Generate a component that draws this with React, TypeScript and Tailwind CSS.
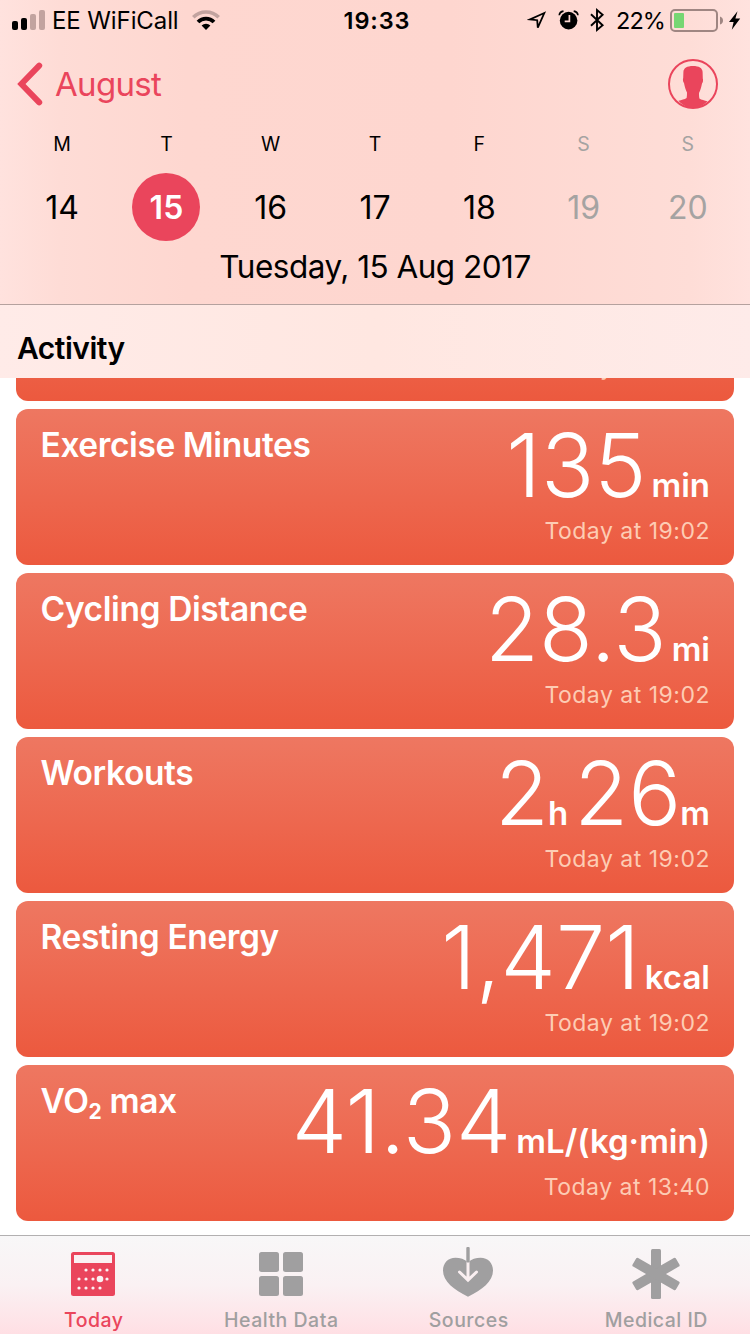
import React from "react";
import clsx from "clsx";

interface IValuePart {
  value: string;
  unit: string;
}

interface IActivity {
  title: React.ReactNode;
  parts: IValuePart[];
  time: string;
}

const days = [
  { letter: "M", date: 14 },
  { letter: "T", date: 15 },
  { letter: "W", date: 16 },
  { letter: "T", date: 17 },
  { letter: "F", date: 18 },
  { letter: "S", date: 19 },
  { letter: "S", date: 20 },
];

const SELECTED = 15;

const activities: IActivity[] = [
  {
    title: "Exercise Minutes",
    parts: [{ value: "135", unit: "min" }],
    time: "Today at 19:02",
  },
  {
    title: "Cycling Distance",
    parts: [{ value: "28.3", unit: "mi" }],
    time: "Today at 19:02",
  },
  {
    title: "Workouts",
    parts: [
      { value: "2", unit: "h" },
      { value: "26", unit: "m" },
    ],
    time: "Today at 19:02",
  },
  {
    title: "Resting Energy",
    parts: [{ value: "1,471", unit: "kcal" }],
    time: "Today at 19:02",
  },
  {
    title: (
      <>
        VO<span className="relative top-[6px] text-[21px] font-bold">2</span> max
      </>
    ),
    parts: [{ value: "41.34", unit: "mL/(kg·min)" }],
    time: "Today at 13:40",
  },
];

function StatusBar() {
  return (
    <div className="flex h-10 items-center justify-between text-black">
      <div className="flex w-[300px] items-center pl-3">
        <svg width="33" height="40" viewBox="0 0 33 40">
          <rect x="0" y="21" width="6" height="9" rx="2" />
          <rect x="9" y="18" width="6" height="12" rx="2" />
          <rect x="18" y="14" width="6" height="16" rx="2" fill="#c2a39f" />
          <rect x="27" y="10" width="6" height="20" rx="2" fill="#c2a39f" />
        </svg>
        <span className="ml-[7px] pt-[2px] text-[24px] leading-[38px] tracking-[-0.1px]">
          EE WiFiCall
        </span>
        <svg className="ml-3" width="30" height="40" viewBox="0 0 30 40">
          <g fill="none">
            <path d="M2.3 17.2a18 18 0 0 1 25.4 0" stroke="#c2a39f" strokeWidth="3.6" />
            <path d="M7 22a11.3 11.3 0 0 1 16 0" stroke="#000" strokeWidth="3.8" />
          </g>
          <path d="M15 30l-4.4-4.4a6.2 6.2 0 0 1 8.8 0z" />
        </svg>
      </div>
      <span className="pl-1 pt-[2px] text-[23.5px] font-semibold leading-[38px] tracking-[0.9px]">
        19:33
      </span>
      <div className="flex w-[300px] items-center justify-end pr-[9px]">
        <svg width="78" height="40" viewBox="527 0 78 40">
          <path
            d="M544.3 13L530 19.4l7.2.8.6 7.4z"
            fill="none"
            stroke="#000"
            strokeWidth="1.8"
          />
          <circle cx="568.6" cy="20.6" r="8.8" />
          <path
            d="M559.3 15.3q.3-3.4 4.2-4.1M577.9 15.3q-.3-3.4-4.2-4.1"
            fill="none"
            stroke="#000"
            strokeWidth="1.7"
          />
          <path d="M569.4 15v6.3h-4.7" fill="none" stroke="#ffd8d2" strokeWidth="1.7" />
          <path
            d="M591 14.3l11.6 11-5.6 4.7V10l5.6 4.7-11.6 11"
            fill="none"
            stroke="#000"
            strokeWidth="1.9"
          />
        </svg>
        <span className="ml-[11px] w-[48px] whitespace-nowrap pt-[2px] text-[23.5px] leading-[38px] tracking-[-0.9px]">
          22%
        </span>
        <svg className="ml-[6px]" width="71" height="40" viewBox="670 0 71 40">
          <rect
            x="671"
            y="10"
            width="46"
            height="21"
            rx="4"
            fill="none"
            stroke="#9f8682"
            strokeWidth="2"
          />
          <rect x="674" y="13" width="10" height="15" rx="1" fill="#76d672" />
          <path d="M720 16.5q3 1 3 4t-3 4z" fill="#9f8682" />
          <path d="M737.5 11.3L729 22h4.6l-1.8 7.7 8.4-11.2h-4.8z" />
        </svg>
      </div>
    </div>
  );
}

function NavBar() {
  return (
    <div className="flex h-[88px] items-center justify-between pl-[17px] pr-8 text-[#ea455c]">
      <div className="flex items-center">
        <svg width="26" height="44" viewBox="0 0 26 44">
          <path
            d="M22.2 3.6L4.4 22l17.8 18.4"
            fill="none"
            stroke="currentColor"
            strokeWidth="6"
            strokeLinecap="round"
          />
        </svg>
        <span className="ml-3 text-[33px] leading-[44px] tracking-[-0.7px]">
          August
        </span>
      </div>
      <svg width="50" height="50" viewBox="0 0 50 50">
        <circle cx="25" cy="25" r="24" fill="none" stroke="currentColor" strokeWidth="2" />
        <path
          fill="currentColor"
          d="M15.4 13C15.6 9 19 7 25 7s9.400 2 9.600 6l.2 6.500c.6 1.500.2 4-.8 5-.7 4-1.700 7-3 9.500 0 2.500.1 4 .4 5.500 2 1.500 5 1.800 8.100 2.800C35.500 46.500 30.500 49 25 49s-10.500-2.500-14.500-7.200c3.100-1 6.100-1.300 8.100-2.800.3-1.500.4-3 .4-5.500-1.300-2.500-2.300-5.500-3-9.500-1-1-1.400-3.500-.8-5z"
        />
      </svg>
    </div>
  );
}

function WeekRow() {
  return (
    <div className="grid grid-cols-7 px-[10px]">
      {days.map((day, index) => (
        <div
          key={index}
          className={clsx(
            "flex flex-col items-center",
            index > 4 ? "text-[#a5a3a2]" : "text-black"
          )}
        >
          <span className="h-[45px] text-[19.5px] leading-8">{day.letter}</span>
          <span
            className={clsx(
              "flex h-[68px] w-[68px] items-center justify-center rounded-full pt-[2px] text-[32px]",
              day.date === SELECTED && "bg-[#ea455c] font-semibold text-white"
            )}
          >
            {day.date}
          </span>
        </div>
      ))}
    </div>
  );
}

function ActivityCard({ title, parts, time }: IActivity) {
  const compound = parts.length > 1;

  return (
    <div className="flex h-[156px] shrink-0 justify-between rounded-xl bg-linear-to-b from-[#ee7761] to-[#ec593e] px-6 text-white">
      <h3 className="ml-[0.5px] mt-[19px] whitespace-nowrap text-[33.5px] font-semibold leading-[34px] tracking-[-0.4px]">
        {title}
      </h3>
      <div className="flex flex-col items-end pt-3">
        <div className="flex h-[88px] items-baseline whitespace-nowrap leading-[88px]">
          {parts.map((part, index) => (
            <React.Fragment key={part.unit}>
              <span className={clsx("text-[88px] font-light", index > 0 && "ml-[6px]")}>
                {part.value}
              </span>
              <span
                className={clsx(
                  "text-[33px] font-semibold",
                  compound ? "-ml-px" : "ml-[5px]"
                )}
              >
                {part.unit}
              </span>
            </React.Fragment>
          ))}
        </div>
        <p className="mt-[11px] text-[23px] leading-[23px] tracking-[0.5px] text-[#fdccb4]">
          {time}
        </p>
      </div>
    </div>
  );
}

function TodayIcon() {
  return (
    <svg className="mr-[2px]" width="50" height="54" viewBox="-3 -5 50 54">
      <rect width="44" height="44" rx="2.5" fill="currentColor" />
      <g fill="#faf1f3">
        <rect x="3" y="3" width="38" height="8" />
        {[15, 22, 29, 36].map((x) => (
          <circle key={x} cx={x} cy="18" r="1.6" />
        ))}
        {[8, 15, 22, 36].map((x) => (
          <circle key={x} cx={x} cy="27" r="1.6" />
        ))}
        <circle cx="29" cy="27" r="3.3" />
        {[8, 15, 22, 29].map((x) => (
          <circle key={x} cx={x} cy="36" r="1.6" />
        ))}
      </g>
    </svg>
  );
}

function DataIcon() {
  return (
    <svg width="50" height="54" viewBox="-3 -5 50 54" fill="currentColor">
      <rect width="20" height="20" rx="2.5" />
      <rect x="24" width="20" height="20" rx="2.5" />
      <rect y="24" width="20" height="20" rx="2.5" />
      <rect x="24" y="24" width="20" height="20" rx="2.5" />
    </svg>
  );
}

function SourcesIcon() {
  return (
    <svg className="mr-[2px]" width="50" height="54" viewBox="0 0 50 54">
      <path
        fill="currentColor"
        d="M25 15.5C21.5 12 17 10.7 12.5 10.7 5 10.7 0 16 0 23.5 0 34.5 11 43 25 49.7 39 43 50 34.5 50 23.5 50 16 45 10.7 37.5 10.7 33 10.7 28.5 12 25 15.5z"
      />
      <path
        d="M25 15v17M16.5 25l8.5 8.2 8.5-8.2"
        fill="none"
        stroke="#faeff1"
        strokeWidth="3"
        strokeLinecap="round"
      />
      <rect x="23.3" y="0" width="3.4" height="15.5" rx="1" fill="currentColor" />
    </svg>
  );
}

function MedicalIcon() {
  return (
    <svg width="50" height="54" viewBox="0 0 50 54" fill="currentColor">
      {[0, 60, 120].map((angle) => (
        <rect
          key={angle}
          x="20"
          y="2"
          width="10"
          height="50"
          rx="1.5"
          transform={`rotate(${angle} 25 27)`}
        />
      ))}
    </svg>
  );
}

const tabs = [
  { label: "Today", icon: <TodayIcon /> },
  { label: "Health Data", icon: <DataIcon /> },
  { label: "Sources", icon: <SourcesIcon /> },
  { label: "Medical ID", icon: <MedicalIcon /> },
];

export default function App() {
  return (
    <div className="flex h-[1334px] w-[750px] flex-col overflow-hidden bg-white font-['Inter',sans-serif]">
      <header className="h-[305px] shrink-0 border-b border-[#b5a19e] bg-[linear-gradient(90deg,#ffe2de_0%,#fedcd6_8%,#fed7d0_25%,#fed6cf_60%,#feddd7_92%,#ffe2de_100%)]">
        <StatusBar />
        <NavBar />
        <WeekRow />
        <p className="mt-[3px] text-center text-[31.5px] leading-[46px] tracking-[-0.5px] text-black">
          Tuesday, 15 Aug 2017
        </p>
      </header>

      <h2 className="h-[73px] shrink-0 bg-linear-to-r from-[#ffebe8] via-[#ffe7e1] to-[#feebe9] pl-[17px] pt-[22px] text-[30px] font-semibold leading-[42px] tracking-[-0.5px] text-black">
        Activity
      </h2>

      <main className="flex h-[857px] shrink-0 flex-col gap-2 overflow-hidden px-4">
        {/* scrolled under the section header */}
        <div className="-mt-[133px] flex shrink-0 flex-col">
          <ActivityCard title="" parts={[]} time="Today at 19:02" />
        </div>
        {activities.map((activity, index) => (
          <ActivityCard key={index} {...activity} />
        ))}
      </main>

      <nav className="grid h-[99px] shrink-0 grid-cols-4 border-t border-[#b2b0b1] bg-linear-to-b from-[#f8f7f8] via-[#faf1f3] to-[#ffdfe4]">
        {tabs.map((tab, index) => (
          <div
            key={tab.label}
            className={clsx(
              "flex flex-col items-center pt-[11px]",
              index === 0 ? "text-[#ea455c]" : "text-[#a09fa0]"
            )}
          >
            {tab.icon}
            <span className="mt-[7px] text-[19.5px] font-medium leading-6 tracking-[0.5px]">
              {tab.label}
            </span>
          </div>
        ))}
      </nav>
    </div>
  );
}
